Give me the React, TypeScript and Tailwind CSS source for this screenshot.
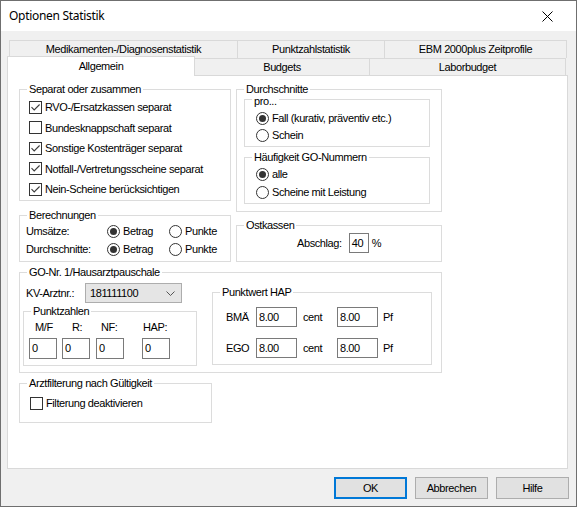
import React from "react";

type Kids = { children?: React.ReactNode };

function Group({
  label,
  className,
  labelClass,
  children,
}: { label: string; className?: string; labelClass?: string } & Kids) {
  return (
    <div className={"relative border border-[#dcdcdc] " + (className ?? "")}>
      <span
        className={
          "absolute left-[7px] bg-white px-[2px] leading-[13px] " + (labelClass ?? "top-[-7px]")
        }
      >
        {label}
      </span>
      {children}
    </div>
  );
}

function CheckBox({ checked }: { checked?: boolean }) {
  return (
    <span className="flex h-[13px] w-[13px] shrink-0 items-center justify-center border border-[#333333] bg-white">
      {checked && (
        <svg width="11" height="11" viewBox="0 0 11 11">
          <path d="M1.5 5.2 L4.2 7.9 L9.6 2.5" fill="none" stroke="#3c3c3c" strokeWidth="1.1" />
        </svg>
      )}
    </span>
  );
}

function Radio({ checked }: { checked?: boolean }) {
  return (
    <span className="flex h-[13px] w-[13px] shrink-0 items-center justify-center rounded-full border border-[#333333] bg-white">
      {checked && <span className="h-[7px] w-[7px] rounded-full bg-[#333333]" />}
    </span>
  );
}

function CheckRow({ checked, label }: { checked?: boolean; label: string }) {
  return (
    <div className="flex h-[20.5px] items-center gap-[3px]">
      <CheckBox checked={checked} />
      <span>{label}</span>
    </div>
  );
}

function RadioOpt({ checked, label, className }: { checked?: boolean; label: string; className?: string }) {
  return (
    <div className={"flex items-center gap-[3px] " + (className ?? "")}>
      <Radio checked={checked} />
      <span>{label}</span>
    </div>
  );
}

function Field({ value, className }: { value: string; className?: string }) {
  return (
    <div className={"h-[20px] border border-[#7a7a7a] bg-white pl-[2px] leading-[18px] " + (className ?? "")}>
      {value}
    </div>
  );
}

function Button({ label, primary }: { label: string; primary?: boolean }) {
  return (
    <div
      className={
        "flex h-[22px] w-[73px] items-center justify-center bg-[#e1e1e1] " +
        (primary ? "border-2 border-[#0078d7]" : "border border-[#adadad]")
      }
    >
      {label}
    </div>
  );
}

function PointCol({ label, value, labelPad }: { label: string; value: string; labelPad: string }) {
  return (
    <div className="flex w-[28px] flex-col">
      <span className={"h-[13px] leading-[13px] whitespace-nowrap " + labelPad}>{label}</span>
      <Field value={value} className="mt-[4px] w-[28px] h-[21px] leading-[19px]" />
    </div>
  );
}

export default function App() {
  return (
    <div className="flex h-[507px] w-[577px] flex-col border border-[#6f6f6f] bg-[#f0f0f0] font-['Liberation_Sans',Arial,sans-serif] text-[11px] tracking-[-0.4px] text-black">
      {/* title bar */}
      <div className="flex h-[30px] shrink-0 items-center justify-between bg-white">
        <span className="pl-[8px] font-['Noto_Sans',sans-serif] text-[12px] tracking-[-0.3px]">
          Optionen Statistik
        </span>
        <svg width="11" height="11" viewBox="0 0 11 11" className="mr-[23px]">
          <path d="M0.5 0.5 L10.5 10.5 M10.5 0.5 L0.5 10.5" stroke="#000" strokeWidth="1" />
        </svg>
      </div>

      {/* tab strip */}
      <div className="flex flex-col pt-[9px]">
        <div className="ml-[8px] flex h-[18px]">
          <div className="flex w-[228px] items-center justify-center border-l border-t border-[#d9d9d9]">
            Medikamenten-/Diagnosenstatistik
          </div>
          <div className="flex w-[147px] items-center justify-center border-l border-t border-[#d9d9d9]">
            Punktzahlstatistik
          </div>
          <div className="flex w-[183px] items-center justify-center border-l border-r border-t border-[#d9d9d9]">
            EBM 2000plus Zeitprofile
          </div>
        </div>
        <div className="ml-[6px] flex h-[17px] items-end">
          <div className="relative z-10 mb-[-1px] flex h-[20px] w-[188px] shrink-0 items-start justify-center border-l border-r border-t border-[#d9d9d9] bg-white pt-[1px]">
            Allgemein
          </div>
          <div className="flex h-[17px] w-[175px] items-center justify-center border-r border-t border-[#d9d9d9]">
            Budgets
          </div>
          <div className="flex h-[17px] w-[196px] items-center justify-center border-r border-t border-[#d9d9d9]">
            Laborbudget
          </div>
        </div>
      </div>

      {/* tab page */}
      <div className="ml-[6px] flex h-[394px] w-[561px] shrink-0 flex-col border border-[#d9d9d9] bg-white pl-[11px] pt-[13px]">
        <div className="flex gap-[5px]">
          {/* left column */}
          <div className="flex w-[212px] flex-col">
            <Group label="Separat oder zusammen" className="h-[112px] pl-[9px] pt-[7px]">
              <CheckRow checked label="RVO-/Ersatzkassen separat" />
              <CheckRow label="Bundesknappschaft separat" />
              <CheckRow checked label="Sonstige Kostenträger separat" />
              <CheckRow checked label="Notfall-/Vertretungsscheine separat" />
              <CheckRow checked label="Nein-Scheine berücksichtigen" />
            </Group>
            <Group label="Berechnungen" className="mt-[14px] h-[47px] pl-[6px] pt-[6px]">
              <div className="flex h-[18px] items-center">
                <span className="w-[81px]">Umsätze:</span>
                <RadioOpt checked label="Betrag" className="w-[62px]" />
                <RadioOpt label="Punkte" />
              </div>
              <div className="flex h-[18px] items-center">
                <span className="w-[81px]">Durchschnitte:</span>
                <RadioOpt checked label="Betrag" className="w-[62px]" />
                <RadioOpt label="Punkte" />
              </div>
            </Group>
          </div>

          {/* right column */}
          <div className="flex w-[206px] flex-col">
            <Group label="Durchschnitte" labelClass="top-[-7px] left-[5px]" className="flex h-[123px] flex-col gap-[10px] pl-[7px] pt-[9px]">
              <Group label="pro..." labelClass="top-[-5px]" className="h-[48px] w-[186px] pl-[11px] pt-[10px]">
                <RadioOpt checked label="Fall (kurativ, präventiv etc.)" className="h-[17px]" />
                <RadioOpt label="Schein" className="h-[17px]" />
              </Group>
              <Group label="Häufigkeit GO-Nummern" className="h-[47px] w-[186px] pl-[11px] pt-[7px]">
                <RadioOpt checked label="alle" className="h-[18px]" />
                <RadioOpt label="Scheine mit Leistung" className="h-[18px]" />
              </Group>
            </Group>
            <Group label="Ostkassen" labelClass="top-[-7px] left-[5px]" className="mt-[13px] h-[37px] pl-[60px] pt-[7px]">
              <div className="flex items-center">
                <span>Abschlag:</span>
                <Field value="40" className="ml-[7px] h-[19px] w-[20px] leading-[17px]" />
                <span className="ml-[3px]">%</span>
              </div>
            </Group>
          </div>
        </div>

        {/* GO-Nr. 1 / Hausarztpauschale */}
        <Group label="GO-Nr. 1/Hausarztpauschale" className="mt-[10px] flex h-[101px] w-[423px] items-start">
          <div className="flex w-[174px] flex-col pl-[3px] pt-[10px]">
            <div className="flex items-center pl-[3px]">
              <span className="w-[59px]">KV-Arztnr.:</span>
              <div className="flex h-[20px] w-[97px] items-center justify-between border border-[#adadad] bg-[#e5e5e5] pl-[4px] pr-[6px]">
                <span>181111100</span>
                <svg width="9" height="5" viewBox="0 0 9 5">
                  <path d="M0.5 0.5 L4.5 4.5 L8.5 0.5" fill="none" stroke="#555" strokeWidth="1" />
                </svg>
              </div>
            </div>
            <Group label="Punktzahlen" className="mt-[8px] flex h-[55px] w-[174px] pl-[5px] pt-[9px]">
              <PointCol label="M/F" value="0" labelPad="pl-[6px]" />
              <div className="ml-[5px]">
                <PointCol label="R:" value="0" labelPad="pl-[10px]" />
              </div>
              <div className="ml-[6px]">
                <PointCol label="NF:" value="0" labelPad="pl-[5px]" />
              </div>
              <div className="ml-[18px]">
                <PointCol label="HAP:" value="0" labelPad="pl-[1px]" />
              </div>
            </Group>
          </div>
          <Group label="Punktwert HAP" className="ml-[18px] mt-[19px] flex h-[73px] w-[220px] flex-col gap-[11px] pl-[13px] pt-[14px]">
            <div className="flex items-center">
              <span className="w-[30px]">BMÄ</span>
              <Field value="8.00" className="w-[41px]" />
              <span className="ml-[6px] w-[34px]">cent</span>
              <Field value="8.00" className="w-[41px]" />
              <span className="ml-[5px]">Pf</span>
            </div>
            <div className="flex items-center">
              <span className="w-[30px]">EGO</span>
              <Field value="8.00" className="w-[41px]" />
              <span className="ml-[6px] w-[34px]">cent</span>
              <Field value="8.00" className="w-[41px]" />
              <span className="ml-[5px]">Pf</span>
            </div>
          </Group>
        </Group>

        <Group label="Arztfilterung nach Gültigkeit" className="mt-[10px] h-[40px] w-[193px] pl-[10px] pt-[9px]">
          <CheckRow label="Filterung deaktivieren" />
        </Group>
      </div>

      {/* dialog buttons */}
      <div className="mt-[8px] flex justify-end gap-[8px] pr-[7px]">
        <Button label="OK" primary />
        <Button label="Abbrechen" />
        <Button label="Hilfe" />
      </div>
    </div>
  );
}
